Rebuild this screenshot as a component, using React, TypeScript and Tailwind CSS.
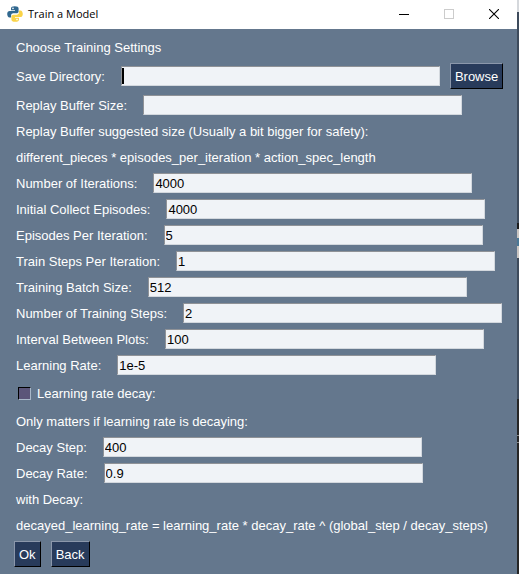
import type { ReactNode } from "react";

const INPUT =
  "h-5 w-[319px] shrink-0 border border-t-[#8f9297] border-l-[#8f9297] border-r-[#d3d8de] border-b-[#d3d8de] bg-[#f0f3f7] px-px text-black outline-none";
const BUTTON =
  "h-[26px] border border-t-[#8b97ab] border-l-[#8b97ab] border-r-black border-b-black bg-[#283b5b] px-1 pt-px text-white";

function Field({ id, label, value }: { id: string; label: string; value: string }) {
  return (
    <div className="flex h-[26px] items-center gap-4">
      <label htmlFor={id} className="pt-0.5">{label}</label>
      <input id={id} type="text" defaultValue={value} className={INPUT} />
    </div>
  );
}

function Line({ children }: { children: ReactNode }) {
  return <p className="flex h-[26px] items-center pt-0.5">{children}</p>;
}

function PythonLogo() {
  return (
    <svg width="16" height="16" viewBox="0 0 16 16" aria-hidden="true">
      <path
        d="M7.800.2C5.200.2 4 1 4 2.500V4.300H8v.6H2.700C1.200 4.900.2 6.100.2 8s1 3.600 2.300 3.600h1.600V9.500c0-1.300 1-2.200 2.200-2.200h3.200c1.200 0 2.100-.8 2.100-1.900V2.500C11.600 1 10.300.2 7.800.2Z"
        fill="#31688f"
      />
      <path
        d="M8.200 15.800c2.600 0 3.800-.8 3.800-2.300v-1.800H8v-.6h5.300c1.500 0 2.500-1.200 2.500-3.100s-1-3.600-2.300-3.600h-1.600v2.100c0 1.300-1 2.200-2.200 2.200H6.500c-1.200 0-2.100.8-2.100 1.900v2.900c0 1.500 1.300 2.300 3.800 2.300Z"
        fill="#fad348"
      />
      <circle cx="6" cy="2.400" r=".8" fill="#fff" />
      <circle cx="10" cy="13.600" r=".8" fill="#fff" />
    </svg>
  );
}

export default function App() {
  return (
    <div className="flex min-h-screen overflow-hidden font-['Liberation_Sans',Arial,sans-serif] text-[13px] leading-4 text-white">
      <main className="flex min-w-0 flex-1 flex-col bg-[#64778d]">
        <header className="flex h-[29px] items-center bg-white pb-0.5 text-black">
          <div className="flex flex-1 items-center gap-[5px] pl-[7px]">
            <PythonLogo />
            <h1 className="pt-px font-['Open_Sans','Noto_Sans',sans-serif] text-[11px]">Train a Model</h1>
          </div>
          <button aria-label="Minimize" className="flex h-[26px] w-[45px] items-center justify-center">
            <svg width="10" height="10" viewBox="0 0 10 10" shapeRendering="crispEdges">
              <path d="M0 5.500H10" stroke="#000" />
            </svg>
          </button>
          <button aria-label="Maximize" disabled className="flex h-[26px] w-[45px] items-center justify-center">
            <svg width="10" height="10" viewBox="0 0 10 10" shapeRendering="crispEdges">
              <path d="M.5.5h9v9h-9Z" fill="none" stroke="#ccc" />
            </svg>
          </button>
          <button aria-label="Close" className="flex h-[26px] w-[46px] items-center justify-center">
            <svg width="10" height="10" viewBox="0 0 10 10">
              <path d="M0 0 10 10M10 0 0 10" stroke="#000" strokeWidth="1.100" />
            </svg>
          </button>
        </header>

        <form className="flex flex-col px-4 pt-[5px] pb-1 whitespace-nowrap" onSubmit={(e) => e.preventDefault()}>
          <h2 className="flex h-[26px] items-center pt-0.5">Choose Training Settings</h2>
          <div className="flex h-8 items-center gap-4">
            <label htmlFor="save-dir" className="pt-0.5">Save Directory:</label>
            <div className="flex items-center gap-[10px]">
              <div className="relative flex">
                <input id="save-dir" type="text" className={INPUT} />
                <span className="absolute top-0.5 left-px h-4 w-0.5 bg-black" />
              </div>
              <button type="button" className={BUTTON}>Browse</button>
            </div>
          </div>
          <Field id="buffer" label="Replay Buffer Size:" value="" />
          <Line>Replay Buffer suggested size (Usually a bit bigger for safety):</Line>
          <Line>different_pieces * episodes_per_iteration * action_spec_length</Line>
          <Field id="iterations" label="Number of Iterations:" value="4000" />
          <Field id="initial" label="Initial Collect Episodes:" value="4000" />
          <Field id="episodes" label="Episodes Per Iteration:" value="5" />
          <Field id="train-steps" label="Train Steps Per Iteration:" value="1" />
          <Field id="batch" label="Training Batch Size:" value="512" />
          <Field id="training-steps" label="Number of Training Steps:" value="2" />
          <Field id="interval" label="Interval Between Plots:" value="100" />
          <Field id="rate" label="Learning Rate:" value="1e-5" />
          <div className="flex h-[30px] items-center gap-1.5 pl-0.5">
            <input
              id="decay"
              type="checkbox"
              className="size-[13px] appearance-none border border-t-black border-l-black border-r-[#a9b8c9] border-b-[#a9b8c9] bg-[#5b5579]"
            />
            <label htmlFor="decay" className="pt-0.5">Learning rate decay:</label>
          </div>
          <Line>Only matters if learning rate is decaying:</Line>
          <Field id="decay-step" label="Decay Step:" value="400" />
          <Field id="decay-rate" label="Decay Rate:" value="0.9" />
          <Line>with Decay:</Line>
          <Line>decayed_learning_rate = learning_rate * decay_rate ^ (global_step / decay_steps)</Line>
          <div className="-ml-0.5 flex h-8 items-center gap-[10px]">
            <button type="submit" className={BUTTON}>Ok</button>
            <button type="button" className={BUTTON}>Back</button>
          </div>
        </form>
      </main>
      <div className="flex w-0.5 flex-col bg-[#262626]" aria-hidden="true">
        <div className="h-3 bg-[#d5d8dc]" />
        <div className="h-[211px] bg-[#3e4b5c]" />
        <div className="h-1.5 bg-[#1c1c1c]" />
        <div className="h-[9px] bg-[#c9c5c2]" />
        <div className="h-2 bg-[#4a7795]" />
        <div className="h-3 bg-[#c9c5c2]" />
        <div className="h-[141px] bg-[#3e4b5c]" />
        <div className="h-9" />
        <div className="h-px bg-[#8a8a8a]" />
        <div className="h-1.5" />
        <div className="h-px bg-[#8a8a8a]" />
      </div>
    </div>
  );
}
